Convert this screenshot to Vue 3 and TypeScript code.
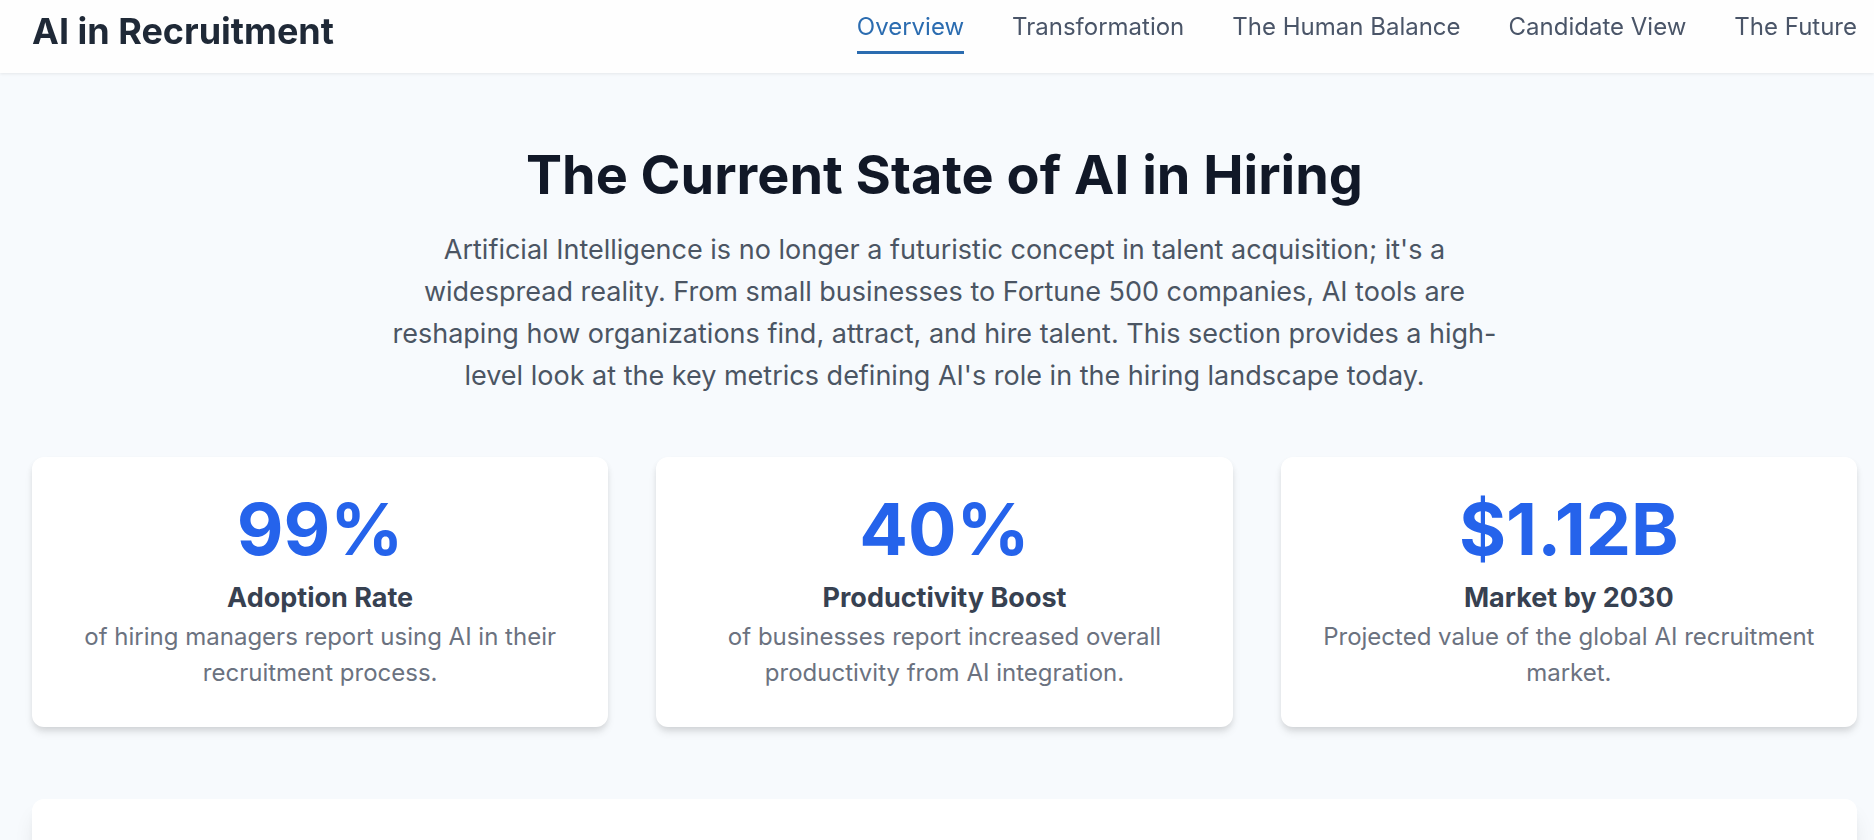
<script setup lang="ts">
import { ref } from 'vue'

interface NavItem {
  id: string
  label: string
}

interface Stat {
  value: string
  title: string
  text: string
}

const navItems: NavItem[] = [
  { id: 'overview', label: 'Overview' },
  { id: 'transformation', label: 'Transformation' },
  { id: 'human-balance', label: 'The Human Balance' },
  { id: 'candidate-view', label: 'Candidate View' },
  { id: 'future', label: 'The Future' },
]

const active = ref('overview')

const stats: Stat[] = [
  { value: '99%', title: 'Adoption Rate', text: 'of hiring managers report using AI in their recruitment process.' },
  { value: '40%', title: 'Productivity Boost', text: 'of businesses report increased overall productivity from AI integration.' },
  { value: '$1.12B', title: 'Market by 2030', text: 'Projected value of the global AI recruitment market.' },
]
</script>

<template>
  <div class="page">
    <header class="header">
      <h1 class="brand">AI in Recruitment</h1>
      <nav class="nav" aria-label="Sections">
        <a
          v-for="item in navItems"
          :key="item.id"
          :href="`#${item.id}`"
          class="nav-link"
          :class="{ active: active === item.id }"
          @click="active = item.id"
        >{{ item.label }}</a>
      </nav>
    </header>

    <main class="main">
      <section id="overview" class="intro">
        <h2 class="intro-title">The Current State of AI in Hiring</h2>
        <p class="intro-text">
          Artificial Intelligence is no longer a futuristic concept in talent acquisition; it's a
          widespread reality. From small businesses to Fortune 500 companies, AI tools are reshaping
          how organizations find, attract, and hire talent. This section provides a high-level look
          at the key metrics defining AI's role in the hiring landscape today.
        </p>
      </section>

      <div class="stats">
        <article v-for="stat in stats" :key="stat.title" class="card">
          <p class="card-value">{{ stat.value }}</p>
          <h3 class="card-title">{{ stat.title }}</h3>
          <p class="card-text">{{ stat.text }}</p>
        </article>
      </div>

      <section class="panel"></section>
    </main>
  </div>
</template>

<style>
body {
  background: #f7fafc;
}
</style>

<style scoped>
.page {
  height: 100vh;
  overflow-y: auto;
  scrollbar-width: none;
  background: #f7fafd;
  color: #1f2937;
  font-family: Inter, "Liberation Sans", sans-serif;
}

h1,
h2,
h3,
p {
  margin: 0;
}

.header {
  position: sticky;
  top: 0;
  z-index: 1;
  display: flex;
  flex-wrap: wrap;
  align-items: center;
  justify-content: space-between;
  padding: 7px 17px 18px 32px;
  background: #fefefe;
  box-shadow: 0 1px 3px rgba(0, 0, 0, 0.08);
}

.brand {
  font-size: 36px;
  line-height: 48px;
  font-weight: 700;
  color: #1f2937;
}

.nav {
  display: flex;
  flex-wrap: wrap;
  gap: 0 48px;
}

.nav-link {
  padding-bottom: 5px;
  border-bottom: 3px solid transparent;
  font-size: 24px;
  line-height: 38px;
  color: #4a5568;
  text-decoration: none;
}

.nav-link.active {
  color: #2b6cb0;
  border-bottom-color: #2b6cb0;
}

.main {
  padding: 72px 17px 72px 32px;
}

.intro {
  max-width: 1152px;
  margin: 0 auto 60px;
  text-align: center;
}

.intro-title {
  margin-bottom: 24px;
  font-size: 54px;
  line-height: 60px;
  font-weight: 700;
  color: #111827;
}

.intro-text {
  font-size: 27px;
  line-height: 42px;
  color: #4b5563;
}

.stats {
  display: grid;
  grid-template-columns: repeat(auto-fit, minmax(400px, 1fr));
  gap: 48px;
  margin-bottom: 72px;
}

.card {
  padding: 36px;
  border-radius: 12px;
  background: #ffffff;
  box-shadow: 0 6px 9px -1px rgba(0, 0, 0, 0.1), 0 3px 6px -1px rgba(0, 0, 0, 0.08);
  text-align: center;
}

.card-value {
  margin-bottom: 12px;
  font-size: 72px;
  line-height: 72px;
  font-weight: 700;
  color: #2563eb;
}

.card-title {
  font-size: 27px;
  line-height: 42px;
  font-weight: 700;
  color: #374151;
}

.card-text {
  font-size: 24px;
  line-height: 36px;
  color: #6b7280;
}

.panel {
  min-height: 480px;
  border-radius: 12px;
  background: #ffffff;
  box-shadow: 0 15px 22px -4px rgba(0, 0, 0, 0.1), 0 6px 9px -3px rgba(0, 0, 0, 0.06);
}
</style>
